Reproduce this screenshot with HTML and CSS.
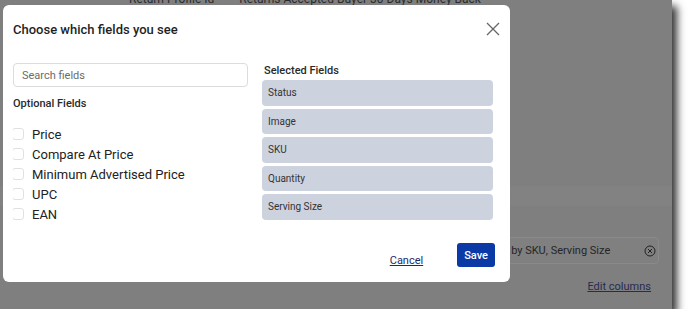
FILE: index.html
```html
<!DOCTYPE html>
<html lang="en">
<head>
    <meta charset="UTF-8">
    <meta name="viewport" content="width=device-width, initial-scale=1.0">
    <title>Choose which fields you see</title>
    <link rel="stylesheet" href="styles.css">
</head>
<body>
    <div class="backdrop">
        <div class="page">
            <div class="page-head">
                <span class="head-label">Return Profile Id</span>
                <span class="head-value">Returns Accepted Buyer 30 Days Money Back</span>
            </div>
            <div class="page-band"></div>
            <div class="page-tools">
                <div class="sort-box">
                    <span class="sort-text">Sort by SKU, Serving Size</span>
                    <svg class="sort-clear" width="12" height="12" viewBox="0 0 12 12">
                        <circle cx="6" cy="6" r="5" fill="none" stroke="#222" stroke-width="1"/>
                        <path d="M4 4 L8 8 M8 4 L4 8" stroke="#222" stroke-width="1"/>
                    </svg>
                </div>
                <a class="edit-link" href="#">Edit columns</a>
            </div>
        </div>

        <div class="modal">
            <div class="modal-header">
                <h2 class="modal-title">Choose which fields you see</h2>
                <button class="modal-close" type="button" aria-label="Close">
                    <svg width="14" height="14" viewBox="0 0 14 14">
                        <path d="M1 1 L13 13 M13 1 L1 13" stroke="#666" stroke-width="1.3" fill="none"/>
                    </svg>
                </button>
            </div>

            <div class="modal-body">
                <div class="optional-col">
                    <input class="search-input" type="text" placeholder="Search fields">
                    <div class="col-label">Optional Fields</div>
                    <ul class="field-list">
                        <li><span class="check"></span>Price</li>
                        <li><span class="check"></span>Compare At Price</li>
                        <li><span class="check"></span>Minimum Advertised Price</li>
                        <li><span class="check"></span>UPC</li>
                        <li><span class="check"></span>EAN</li>
                    </ul>
                </div>
                <div class="selected-col">
                    <div class="col-label">Selected Fields</div>
                    <ul class="selected-list">
                        <li>Status</li>
                        <li>Image</li>
                        <li>SKU</li>
                        <li>Quantity</li>
                        <li>Serving Size</li>
                    </ul>
                </div>
            </div>

            <div class="modal-footer">
                <a class="cancel-link" href="#">Cancel</a>
                <button class="save-btn" type="button">Save</button>
            </div>
        </div>
    </div>
</body>
</html>
```

FILE: styles.css
```css
body {
    margin: 0;
    background-color: #fff;
    font-family: Roboto, "Liberation Sans", sans-serif;
    color: #222;
}
.backdrop {
    position: relative;
    width: 672px;
    height: 309px;
    background-color: #7f7f7f;
    box-shadow: 5px 6px 8px rgba(0,0,0,0.8);
    overflow: hidden;
}
.page {
    display: flex;
    flex-direction: column;
    height: 100%;
}
.page-head {
    display: flex;
    gap: 25px;
    margin-top: -8px;
    padding-left: 129px;
    font-size: 12px;
    color: #2b2b2b;
    height: 14px;
}
.page-band {
    margin-top: 180px;
    height: 20px;
    background-color: #828282;
}
.page-tools {
    display: flex;
    flex-direction: column;
    align-items: flex-end;
    padding-right: 13px;
    margin-top: 31px;
}
.sort-box {
    display: flex;
    align-items: center;
    width: 168px;
    height: 25px;
    padding: 0 2px 0 25px;
    border: 1px solid #8a8a8a;
    border-radius: 4px;
    background-color: #808080;
    font-size: 11px;
    color: #262626;
}
.sort-clear {
    margin-left: auto;
}
.edit-link {
    margin-top: 16px;
    margin-right: 8px;
    font-size: 11px;
    color: #262b55;
}
.modal {
    position: absolute;
    left: 3px;
    top: 5px;
    width: 507px;
    height: 277px;
    background-color: #fff;
    border-radius: 6px;
    display: flex;
    flex-direction: column;
}
.modal-header {
    display: flex;
    justify-content: space-between;
    align-items: center;
    padding: 16px 9px 0 10px;
}
.modal-title {
    margin: 0;
    font-size: 13px;
    font-weight: 500;
    color: #1f1f1f;
}
.modal-close {
    border: none;
    background: none;
    padding: 0;
    width: 16px;
    height: 16px;
    display: flex;
    align-items: center;
    justify-content: center;
}
.modal-body {
    display: flex;
    gap: 14px;
    padding: 0 17px 0 10px;
    margin-top: 26px;
}
.optional-col {
    width: 235px;
}
.selected-col {
    flex: 1;
}
.search-input {
    box-sizing: border-box;
    width: 100%;
    height: 24px;
    border: 1px solid #dcdcdc;
    border-radius: 4px;
    padding: 0 8px;
    font-family: inherit;
    font-size: 11px;
}
.search-input::placeholder {
    color: #6b6b6b;
}
.col-label {
    font-size: 11px;
    font-weight: 500;
    color: #2a2a2a;
}
.optional-col .col-label {
    margin-top: 10px;
}
.selected-col .col-label {
    padding-left: 2px;
    margin-top: 1px;
}
.field-list {
    list-style: none;
    margin: 14px 0 0;
    padding: 0;
    height: 98px;
    overflow: hidden;
}
.field-list li {
    display: flex;
    align-items: center;
    gap: 8px;
    height: 20px;
    font-size: 13px;
    color: #222;
}
.check {
    box-sizing: border-box;
    width: 12px;
    height: 12px;
    border: 1px solid #e1e1e1;
    border-radius: 3px;
    margin-left: -1px;
}
.selected-list {
    list-style: none;
    margin: 3px 0 0;
    padding: 0;
    display: grid;
    gap: 3px;
}
.selected-list li {
    height: 25.5px;
    line-height: 25px;
    padding-left: 6px;
    background-color: #cdd2df;
    border-radius: 4px;
    font-size: 10px;
    color: #333;
}
.modal-footer {
    display: flex;
    justify-content: flex-end;
    align-items: center;
    gap: 34px;
    margin-top: auto;
    padding: 0 15px 15px 0;
}
.cancel-link {
    font-size: 11px;
    color: #1b2b6b;
    margin-top: 10px;
}
.save-btn {
    height: 24px;
    padding: 0 7px;
    border: none;
    border-radius: 3px;
    background-color: #0b39a6;
    color: #fff;
    font-family: inherit;
    font-size: 11px;
    font-weight: 500;
}
```
